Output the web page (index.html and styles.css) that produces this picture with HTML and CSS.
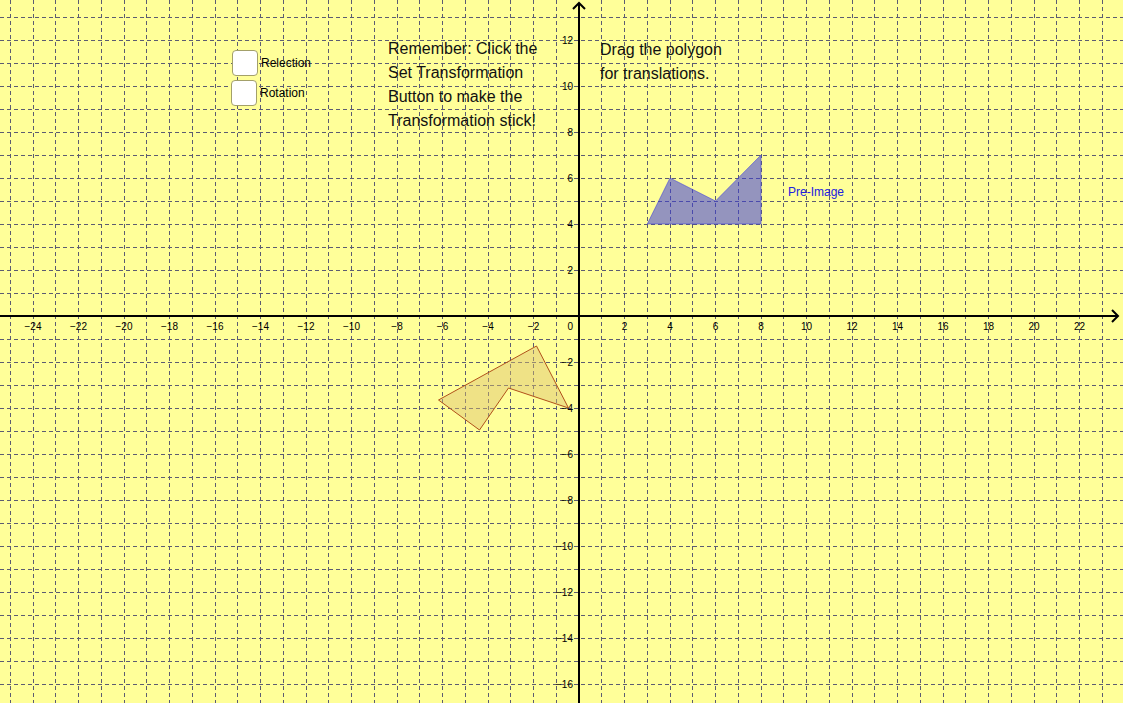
FILE: index.html
```html
<!DOCTYPE html>
<html>
<head>
<meta charset="utf-8">
<link rel="stylesheet" href="styles.css">
</head>
<body>
<div class="board">
<svg class="graph" width="1123" height="703" viewBox="0 0 1123 703" xmlns="http://www.w3.org/2000/svg">
  <rect width="1123" height="703" class="bg"/>
  <g class="grid">
    <line x1="10.5" y1="0" x2="10.5" y2="703"/>
    <line x1="33.5" y1="0" x2="33.5" y2="703"/>
    <line x1="55.5" y1="0" x2="55.5" y2="703"/>
    <line x1="78.5" y1="0" x2="78.5" y2="703"/>
    <line x1="101.5" y1="0" x2="101.5" y2="703"/>
    <line x1="124.5" y1="0" x2="124.5" y2="703"/>
    <line x1="146.5" y1="0" x2="146.5" y2="703"/>
    <line x1="169.5" y1="0" x2="169.5" y2="703"/>
    <line x1="192.5" y1="0" x2="192.5" y2="703"/>
    <line x1="215.5" y1="0" x2="215.5" y2="703"/>
    <line x1="237.5" y1="0" x2="237.5" y2="703"/>
    <line x1="260.5" y1="0" x2="260.5" y2="703"/>
    <line x1="283.5" y1="0" x2="283.5" y2="703"/>
    <line x1="306.5" y1="0" x2="306.5" y2="703"/>
    <line x1="328.5" y1="0" x2="328.5" y2="703"/>
    <line x1="351.5" y1="0" x2="351.5" y2="703"/>
    <line x1="374.5" y1="0" x2="374.5" y2="703"/>
    <line x1="397.5" y1="0" x2="397.5" y2="703"/>
    <line x1="419.5" y1="0" x2="419.5" y2="703"/>
    <line x1="442.5" y1="0" x2="442.5" y2="703"/>
    <line x1="465.5" y1="0" x2="465.5" y2="703"/>
    <line x1="488.5" y1="0" x2="488.5" y2="703"/>
    <line x1="510.5" y1="0" x2="510.5" y2="703"/>
    <line x1="533.5" y1="0" x2="533.5" y2="703"/>
    <line x1="556.5" y1="0" x2="556.5" y2="703"/>
    <line x1="601.5" y1="0" x2="601.5" y2="703"/>
    <line x1="624.5" y1="0" x2="624.5" y2="703"/>
    <line x1="647.5" y1="0" x2="647.5" y2="703"/>
    <line x1="670.5" y1="0" x2="670.5" y2="703"/>
    <line x1="692.5" y1="0" x2="692.5" y2="703"/>
    <line x1="715.5" y1="0" x2="715.5" y2="703"/>
    <line x1="738.5" y1="0" x2="738.5" y2="703"/>
    <line x1="761.5" y1="0" x2="761.5" y2="703"/>
    <line x1="783.5" y1="0" x2="783.5" y2="703"/>
    <line x1="806.5" y1="0" x2="806.5" y2="703"/>
    <line x1="829.5" y1="0" x2="829.5" y2="703"/>
    <line x1="852.5" y1="0" x2="852.5" y2="703"/>
    <line x1="874.5" y1="0" x2="874.5" y2="703"/>
    <line x1="897.5" y1="0" x2="897.5" y2="703"/>
    <line x1="920.5" y1="0" x2="920.5" y2="703"/>
    <line x1="943.5" y1="0" x2="943.5" y2="703"/>
    <line x1="965.5" y1="0" x2="965.5" y2="703"/>
    <line x1="988.5" y1="0" x2="988.5" y2="703"/>
    <line x1="1011.5" y1="0" x2="1011.5" y2="703"/>
    <line x1="1034.5" y1="0" x2="1034.5" y2="703"/>
    <line x1="1056.5" y1="0" x2="1056.5" y2="703"/>
    <line x1="1079.5" y1="0" x2="1079.5" y2="703"/>
    <line x1="1102.5" y1="0" x2="1102.5" y2="703"/>

    <line x1="0" y1="17.5" x2="1123" y2="17.5"/>
    <line x1="0" y1="40.5" x2="1123" y2="40.5"/>
    <line x1="0" y1="63.5" x2="1123" y2="63.5"/>
    <line x1="0" y1="86.5" x2="1123" y2="86.5"/>
    <line x1="0" y1="109.5" x2="1123" y2="109.5"/>
    <line x1="0" y1="132.5" x2="1123" y2="132.5"/>
    <line x1="0" y1="155.5" x2="1123" y2="155.5"/>
    <line x1="0" y1="178.5" x2="1123" y2="178.5"/>
    <line x1="0" y1="201.5" x2="1123" y2="201.5"/>
    <line x1="0" y1="224.5" x2="1123" y2="224.5"/>
    <line x1="0" y1="247.5" x2="1123" y2="247.5"/>
    <line x1="0" y1="270.5" x2="1123" y2="270.5"/>
    <line x1="0" y1="293.5" x2="1123" y2="293.5"/>
    <line x1="0" y1="339.5" x2="1123" y2="339.5"/>
    <line x1="0" y1="362.5" x2="1123" y2="362.5"/>
    <line x1="0" y1="385.5" x2="1123" y2="385.5"/>
    <line x1="0" y1="408.5" x2="1123" y2="408.5"/>
    <line x1="0" y1="431.5" x2="1123" y2="431.5"/>
    <line x1="0" y1="454.5" x2="1123" y2="454.5"/>
    <line x1="0" y1="477.5" x2="1123" y2="477.5"/>
    <line x1="0" y1="500.5" x2="1123" y2="500.5"/>
    <line x1="0" y1="523.5" x2="1123" y2="523.5"/>
    <line x1="0" y1="546.5" x2="1123" y2="546.5"/>
    <line x1="0" y1="569.5" x2="1123" y2="569.5"/>
    <line x1="0" y1="592.5" x2="1123" y2="592.5"/>
    <line x1="0" y1="615.5" x2="1123" y2="615.5"/>
    <line x1="0" y1="638.5" x2="1123" y2="638.5"/>
    <line x1="0" y1="661.5" x2="1123" y2="661.5"/>
    <line x1="0" y1="684.5" x2="1123" y2="684.5"/>
  </g>

  <g class="axes">
    <line x1="0" y1="316" x2="1118" y2="316"/>
    <line x1="579" y1="3" x2="579" y2="703"/>
    <polyline class="arrow" points="1112,310 1118,316 1112,322"/>
    <polyline class="arrow" points="573,9 579,3 585,9"/>
  </g>

  <g class="xlabels">
    <text x="33" y="330">−24</text>
    <text x="78.5" y="330">−22</text>
    <text x="124" y="330">−20</text>
    <text x="169.5" y="330">−18</text>
    <text x="215" y="330">−16</text>
    <text x="260.5" y="330">−14</text>
    <text x="306" y="330">−12</text>
    <text x="351.5" y="330">−10</text>
    <text x="397" y="330">−8</text>
    <text x="442.5" y="330">−6</text>
    <text x="488" y="330">−4</text>
    <text x="533.5" y="330">−2</text>
    <text x="624.5" y="330">2</text>
    <text x="670" y="330">4</text>
    <text x="715.5" y="330">6</text>
    <text x="761" y="330">8</text>
    <text x="806.5" y="330">10</text>
    <text x="852" y="330">12</text>
    <text x="897.5" y="330">14</text>
    <text x="943" y="330">16</text>
    <text x="988.5" y="330">18</text>
    <text x="1034" y="330">20</text>
    <text x="1079.5" y="330">22</text>
  </g>
  <g class="ylabels">
    <text x="573" y="330">0</text>
    <text x="573" y="44">12</text>
    <text x="573" y="90">10</text>
    <text x="573" y="136">8</text>
    <text x="573" y="182">6</text>
    <text x="573" y="228">4</text>
    <text x="573" y="274">2</text>
    <text x="573" y="366">−2</text>
    <text x="573" y="412">−4</text>
    <text x="573" y="458">−6</text>
    <text x="573" y="504">−8</text>
    <text x="573" y="550">−10</text>
    <text x="573" y="596">−12</text>
    <text x="573" y="642">−14</text>
    <text x="573" y="688">−16</text>
  </g>

  <polygon class="image" points="438.5,400 479.5,430 508.5,388 568.5,408 536.5,346"/>
  <polygon class="preimage" points="647.25,224 670,178 715.5,201 761,155 761,224"/>
  <text class="pre-label" x="788" y="196">Pre-Image</text>
</svg>

<div class="check check-reflect"><span class="box"></span><span class="check-label">Relection</span></div>
<div class="check check-rotate"><span class="box"></span><span class="check-label">Rotation</span></div>

<div class="note note-remember">Remember: Click the<br>Set Transformation<br>Button to make the<br>Transformation stick!</div>
<div class="note note-drag">Drag the polygon<br>for translations.</div>
</div>
</body>
</html>
```

FILE: styles.css
```css
html, body {
  margin: 0;
  padding: 0;
  overflow: hidden;
}

.board {
  position: relative;
  width: 1123px;
  height: 703px;
  font-family: "Liberation Sans", Arial, sans-serif;
}

.graph {
  display: block;
}

.bg {
  fill: #ffff99;
}

.grid line {
  stroke: #5c5c72;
  stroke-width: 1;
  stroke-dasharray: 4 3;
}

.axes line {
  stroke: #000;
  stroke-width: 2;
}

.axes .arrow {
  fill: none;
  stroke: #000;
  stroke-width: 2;
}

.xlabels text {
  font-family: "Liberation Sans", Arial, sans-serif;
  font-size: 10px;
  fill: #000;
  text-anchor: middle;
}

.ylabels text {
  font-family: "Liberation Sans", Arial, sans-serif;
  font-size: 10px;
  fill: #000;
  text-anchor: end;
}

.preimage {
  fill: rgba(60, 60, 220, 0.55);
  stroke: rgba(60, 60, 220, 0.55);
  stroke-width: 1;
}

.image {
  fill: rgba(220, 190, 110, 0.45);
  stroke: #b0501a;
  stroke-width: 1;
}

.pre-label {
  font-family: "Liberation Sans", Arial, sans-serif;
  font-size: 12px;
  fill: #2020e0;
}

.check {
  position: absolute;
  display: flex;
  align-items: center;
  gap: 3px;
}

.check-reflect {
  left: 232px;
  top: 50px;
}

.check-rotate {
  left: 231px;
  top: 80px;
}

.box {
  display: block;
  width: 24px;
  height: 24px;
  background: #fff;
  border: 1.5px solid #a3a06a;
  border-radius: 4px;
}

.check-label {
  font-size: 12px;
  color: #000;
}

.note {
  position: absolute;
  font-size: 16px;
  line-height: 24px;
  color: #111;
}

.note-remember {
  left: 388px;
  top: 37px;
}

.note-drag {
  left: 600px;
  top: 38px;
}
```
